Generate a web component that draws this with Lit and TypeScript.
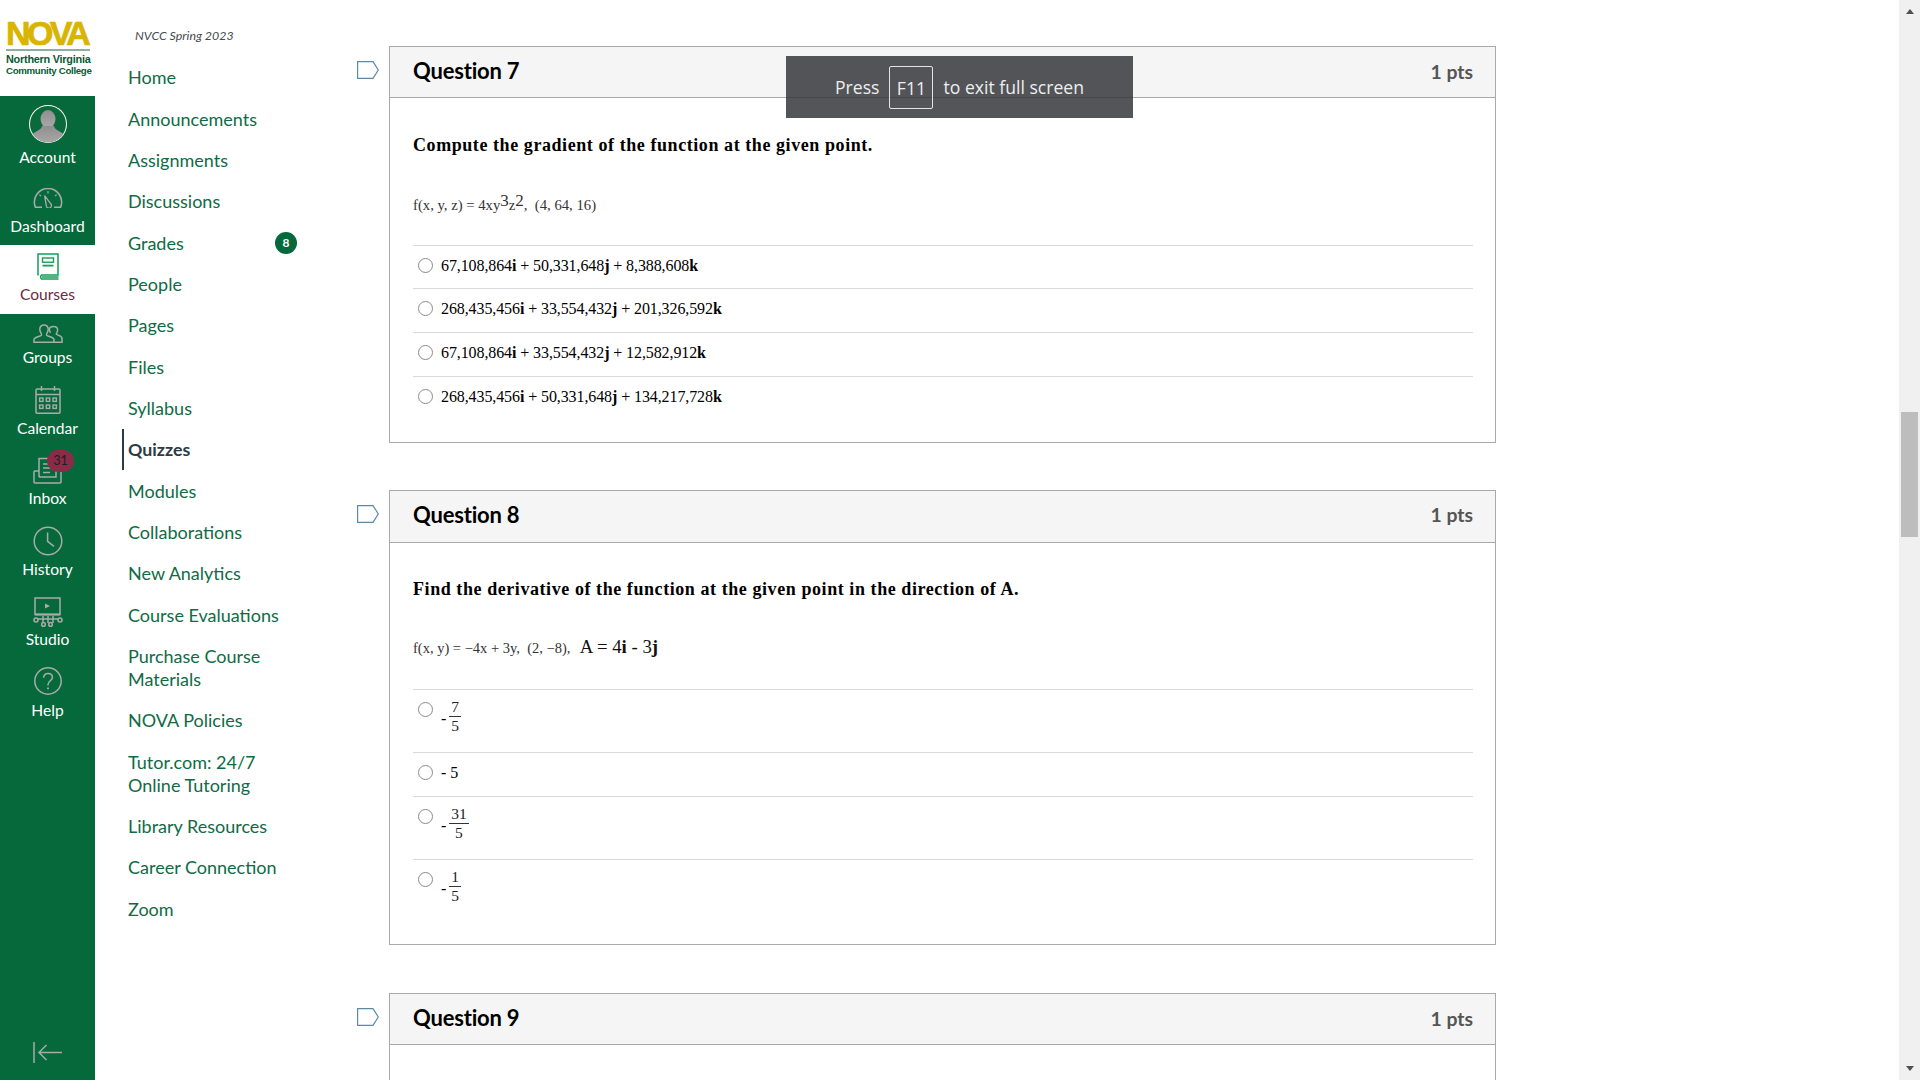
import { LitElement, html, css, svg } from "lit";
import { customElement } from "lit/decorators.js";

const S = "#a8aca9";
const G = "#12a05a";
const ic = (w: number, h: number, body: unknown, color = S) => html`<svg width=${w} height=${h} viewBox="0 0 ${w} ${h}" fill="none" stroke=${color} stroke-width="1.5">${body}</svg>`;

const icons: Record<string, () => unknown> = {
  account: () => html`<svg width="40" height="40" viewBox="0 0 40 40"><defs><linearGradient id="av" x1="0" y1="0" x2="0" y2="1"><stop offset="0" stop-color="#8f8f8f"/><stop offset="1" stop-color="#a9a9a9"/></linearGradient><clipPath id="avc"><circle cx="20" cy="20" r="18.5"/></clipPath></defs><circle cx="20" cy="20" r="19" fill="#fff"/><circle cx="20" cy="20" r="18" fill="#0a6a3c"/><g clip-path="url(#avc)" fill="url(#av)"><ellipse cx="20" cy="15" rx="7.5" ry="9"/><path d="M14 22 C13 27 6 27 3 32 V40 H37 V32 C34 27 27 27 26 22 Z"/></g></svg>`,
  dashboard: () => ic(30, 20, svg`<path d="M9 19.2H2.4A13.6 13.6 0 1 1 27.6 19.2H21"/><path d="M11.6 7.6 L17.6 15.6 A2.6 2.6 0 1 1 13.4 18.4 Z" stroke-width="1.3"/><path d="M15 3v2.4M6.4 6.6l1.6 1.6M23.6 6.6 22 8.2" stroke-width="1.2"/>`),
  courses: () => ic(24, 27, svg`<path d="M2 22.5V1H22V22H5.5A3 3 0 0 0 5.5 26H22.5M6 24H22.5"/><rect x="6.5" y="5" width="11" height="4.2" stroke-width="1.4"/><path d="M6.5 12.6H17.5" stroke-width="1.8"/>`, G),
  groups: () => ic(30, 19, svg`<path d="M1 18.2V15.6C1 13 7 12.5 8.4 11.2 9.2 10.2 7 8.6 6.8 5.6 6.6 2.4 8.7 1 11 1S15.4 2.4 15.2 5.6C15 8.6 12.8 10.2 13.6 11.2 15 12.5 21 13 21 15.6V18.2Z"/><path d="M17.5 8.8C16.6 7.6 16.2 6.4 16.4 5 16.7 3.3 18.2 2.4 20.6 2.4 23 2.4 24.6 3.8 24.6 6 24.6 7.8 23.6 9.2 23.2 10 23.6 11.2 29 11.4 29 14.4V18.2H21"/>`),
  calendar: () => ic(26, 29, svg`<rect x="1" y="4" width="24" height="24.2" rx="1"/><path d="M1 9.6H25M6.5 1V6M19.5 1V6"/><g stroke-width="1.4"><rect x="4.6" y="13" width="3.4" height="3.4"/><rect x="11.3" y="13" width="3.4" height="3.4"/><rect x="18" y="13" width="3.4" height="3.4"/><rect x="4.6" y="20" width="3.4" height="3.4"/><rect x="11.3" y="20" width="3.4" height="3.4"/><rect x="18" y="20" width="3.4" height="3.4"/></g>`),
  inbox: () => ic(29, 27, svg`<path d="M6 14H2A1 1 0 0 0 1 15V25A1 1 0 0 0 2 26H27A1 1 0 0 0 28 25V15A1 1 0 0 0 27 14H23"/><path d="M6 20V1.5H23V20H6" /><path d="M10 7H19M10 11H19M10 15.5H17"/>`),
  history: () => ic(30, 30, svg`<circle cx="15" cy="15" r="13.8"/><path d="M14.6 6.6V15.4L21 20.4"/>`),
  studio: () => ic(30, 30, svg`<rect x="2" y="1" width="25" height="16.5"/><path d="M2 17.5H27" stroke-width="2"/><path d="M12 6.5L17 9 12 11.6Z" fill="${S}" stroke="none"/><path d="M4 22H26M10 19V22M15 19V26M20 19V26M10 22V26"/><circle cx="3" cy="23" r="2"/><circle cx="10.5" cy="27.4" r="1.8"/><circle cx="17.5" cy="27.4" r="1.8"/><circle cx="27" cy="23" r="2"/>`),
  help: () => ic(28, 28, svg`<circle cx="14" cy="14" r="13.2"/><path d="M9.6 10.8C9.8 8 11.6 6.6 14 6.6 16.6 6.6 18.4 8.2 18.4 10.4 18.4 13.8 14 13.8 14 17.6V18.4"/><path d="M14 20.4V22.2" stroke-width="1.8"/>`),
};

const sideItems = [
  { k: "account", t: "Account", h: 79, p: 8, g: 3, on: false },
  { k: "dashboard", t: "Dashboard", h: 70, p: 13, g: 8, on: false },
  { k: "courses", t: "Courses", h: 69, p: 8, g: 4, on: true },
  { k: "groups", t: "Groups", h: 66, p: 10, g: 4, on: false },
  { k: "calendar", t: "Calendar", h: 70, p: 5, g: 4, on: false },
  { k: "inbox", t: "Inbox", h: 70, p: 7, g: 4, on: false },
  { k: "history", t: "History", h: 71, p: 6, g: 3, on: false },
  { k: "studio", t: "Studio", h: 70, p: 6, g: 2, on: false },
  { k: "help", t: "Help", h: 70, p: 6, g: 5, on: false },
];

const navItems = ["Home", "Announcements", "Assignments", "Discussions", "Grades", "People", "Pages", "Files", "Syllabus", "Quizzes", "Modules", "Collaborations", "New Analytics", "Course Evaluations", "Purchase Course Materials", "NOVA Policies", "Tutor.com: 24/7 Online Tutoring", "Library Resources", "Career Connection", "Zoom"];

const vec = (a: string, b: string, c: string) => html`${a}<b>i</b> + ${b}<b>j</b> + ${c}<b>k</b>`;

const tag = () => html`<svg class="tag" width="22" height="18" viewBox="0 0 22 18" fill="none" stroke="#5b8aa6" stroke-width="1.2"><path d="M.6.6H16L21.3 9 16 17.4H.6Z"/></svg>`;

const frac = (n: string, d: string) => html`<span class="minus">-</span><span class="frac"><span class="num">${n}</span><span class="den">${d}</span></span>`;

@customElement("app-root")
export class AppRoot extends LitElement {
  static styles = css`
    :host { display: block; }
    * { box-sizing: border-box; }
    .page { position: relative; display: flex; width: 1920px; height: 1080px; overflow: hidden; background: #fff; font-family: Lato, sans-serif; }

    .side { width: 95px; flex: none; height: 1080px; display: flex; flex-direction: column; background: #05693b; }
    .logo { height: 96px; background: #fff; padding: 19px 0 0 6px; display: flex; flex-direction: column; font-family: "Liberation Sans", sans-serif; font-weight: 700; color: #0a5a35; font-size: 10.9px; line-height: 11px; letter-spacing: -.25px; white-space: nowrap; }
    .nova { color: #d9b400; font-size: 34px; line-height: 29px; letter-spacing: -3.6px; -webkit-text-stroke: .7px #d9b400; }
    .rule { height: 2px; width: 84px; background: #8fae9f; margin: 1px 0 3px; }
    .cc { font-size: 9.7px; letter-spacing: -.32px; }
    .si { position: relative; display: flex; flex-direction: column; align-items: center; color: #fff; font-size: 15.6px; line-height: 20px; flex: none; }
    .si svg { display: block; }
    .si.on { background: #fff; color: #6b2b3f; }
    .bd { position: absolute; left: 47px; top: 0; width: 27px; height: 22px; border-radius: 11px; background: #8a2c48; color: #1d1d22; font-size: 12.5px; line-height: 21px; text-align: center; }
    .collapse { margin-top: auto; margin-bottom: 17px; align-self: center; display: block; }

    .nav { width: 262px; flex: none; padding: 26px 0 0 27px; }
    .term { font-size: 12.4px; line-height: 20px; font-style: italic; color: #444b50; margin: 0 0 11px 13px; }
    .nl { position: relative; width: 182px; padding: 9.18px 0 9.18px 6px; color: #0f6b45; font-size: 18px; line-height: 23px; }
    .nl.cur { border-left: 2px solid #2d3b45; padding-left: 4px; color: #2d3b45; font-weight: 700; font-size: 17.8px; }
    .nb { position: absolute; left: 153px; top: 10px; width: 22px; height: 22px; border-radius: 50%; background: #05693b; color: #fff; font-size: 12px; font-weight: 700; line-height: 22px; text-align: center; }

    .main { flex: none; padding-top: 46px; display: flex; flex-direction: column; }
    .q { display: flex; gap: 10px; align-items: flex-start; }
    .tag { flex: none; margin-top: 15px; display: block; }
    .card { width: 1107px; border: 1px solid #a9a9a9; background: #fff; }
    .head { display: flex; justify-content: space-between; align-items: center; height: 51px; padding: 0 22px 0 23px; background: #f5f5f5; border-bottom: 1px solid #a9a9a9; color: #000; }
    .q8 .head { height: 52px; }
    .title { font-size: 22px; font-weight: 700; letter-spacing: -.2px; margin-bottom: 3px; }
    .q8 .title { margin-bottom: 5px; }
    .pts { font-size: 19.4px; font-weight: 700; color: #555; margin-bottom: 2px; }
    .q8 .pts { margin-bottom: 4px; }
    .body { padding: 35px 22px 22px 23px; font-family: "Liberation Serif", serif; color: #000; }
    .q8 .body { padding-top: 34px; }
    .prompt { font-size: 18px; line-height: 24px; font-weight: 700; letter-spacing: .57px; }
    .eq { height: 24px; margin-top: 36px; margin-bottom: 28px; font-size: 14.7px; line-height: 24px; color: #333; white-space: pre; }
    .q8 .eq { margin-top: 34px; margin-bottom: 30px; font-size: 14.5px; }
    .eq sup { font-size: 17px; line-height: 0; vertical-align: 4px; }
    .big { font-size: 18.8px; color: #111; margin-left: 2px; }
    .q7 .eq + .row { height: 43px; }
    .row { display: flex; gap: 8px; align-items: flex-start; height: 44px; border-top: 1px solid #d9d9d9; padding-left: 5px; font-size: 16px; line-height: 20px; }
    .row.f { height: 63px; }
    .radio { flex: none; width: 15px; height: 15px; margin-top: 12px; border: 1.3px solid #8a8a8a; border-radius: 50%; }
    .opt { padding-top: 10px; letter-spacing: -.1px; white-space: nowrap; display: flex; }
    .opt b { font-weight: 700; }
    .row.f .opt { padding-top: 8px; align-items: flex-start; font-size: 15.5px; }
    .minus { margin: 11px 3px 0 0; font-size: 16px; line-height: 20px; }
    .frac { display: inline-flex; flex-direction: column; align-items: center; line-height: 18px; color: #222; }
    .num { display: block; padding: 0 2px; border-bottom: 1px solid #333; height: 19px; }
    .den { display: block; }
    .q8 { margin-top: 47px; }
    .q9 { margin-top: 48px; }
    .q9 .body { height: 200px; }

    .sb { position: absolute; right: 0; top: 0; width: 21px; height: 1080px; background: #f0f0f0; display: flex; flex-direction: column; align-items: center; }
    .arrow { width: 0; height: 0; border-left: 4.5px solid transparent; border-right: 4.5px solid transparent; border-bottom: 5px solid #505050; margin-top: 9px; }
    .arrow.dn { margin-top: auto; margin-bottom: 9px; border-bottom: 0; border-top: 5px solid #505050; }
    .thumb { width: 17px; height: 125px; margin-top: 398px; background: #bdbdbd; }

    .fs { position: absolute; left: 786px; top: 56px; width: 347px; height: 62px; background: rgba(48,51,55,.83); color: #eee; font-family: "Open Sans", sans-serif; font-size: 17.6px; display: flex; align-items: center; justify-content: center; gap: 10px; }
    .fs .key { display: block; width: 44px; height: 43px; border: 1px solid #e4e4e4; border-radius: 2px; text-align: center; line-height: 42px; }
  `;

  render() {
    return html`<div class="page">
      <aside class="side">
        <div class="logo"><span class="nova">NOVA</span><span class="rule"></span><span>Northern Virginia</span><span class="cc">Community College</span></div>
        ${sideItems.map((s) => html`<div class="si ${s.on ? "on" : ""}" style="height:${s.h}px;padding-top:${s.p}px;gap:${s.g}px">
          ${icons[s.k]()}<span>${s.t}</span>
          ${s.k === "inbox" ? html`<span class="bd">31</span>` : ""}
        </div>`)}
        <svg class="collapse" width="30" height="21" viewBox="0 0 30 21" fill="none" stroke="#a8aca9" stroke-width="1.5"><path d="M1 0V21M29 10.5H6M13.5 3 6 10.5 13.5 18"/></svg>
      </aside>
      <nav class="nav">
        <div class="term">NVCC Spring 2023</div>
        ${navItems.map((n) => html`<div class="nl ${n === "Quizzes" ? "cur" : ""}">${n}${n === "Grades" ? html`<span class="nb">8</span>` : ""}</div>`)}
      </nav>
      <main class="main">
        <div class="q q7">${tag()}<section class="card">
          <div class="head"><span class="title">Question 7</span><span class="pts">1 pts</span></div>
          <div class="body">
            <div class="prompt">Compute the gradient of the function at the given point.</div>
            <div class="eq">f(x, y, z) = 4xy<sup>3</sup>z<sup>2</sup>,  (4, 64, 16)</div>
            <div class="row"><span class="radio"></span><span class="opt"><span>${vec("67,108,864", "50,331,648", "8,388,608")}</span></span></div>
            <div class="row"><span class="radio"></span><span class="opt"><span>${vec("268,435,456", "33,554,432", "201,326,592")}</span></span></div>
            <div class="row"><span class="radio"></span><span class="opt"><span>${vec("67,108,864", "33,554,432", "12,582,912")}</span></span></div>
            <div class="row"><span class="radio"></span><span class="opt"><span>${vec("268,435,456", "50,331,648", "134,217,728")}</span></span></div>
          </div>
        </section></div>
        <div class="q q8">${tag()}<section class="card">
          <div class="head"><span class="title">Question 8</span><span class="pts">1 pts</span></div>
          <div class="body">
            <div class="prompt">Find the derivative of the function at the given point in the direction of A.</div>
            <div class="eq">f(x, y) = −4x + 3y,  (2, −8),  <span class="big">A = 4<b>i</b> - 3<b>j</b></span></div>
            <div class="row f"><span class="radio"></span><span class="opt">${frac("7", "5")}</span></div>
            <div class="row"><span class="radio"></span><span class="opt">- 5</span></div>
            <div class="row f"><span class="radio"></span><span class="opt">${frac("31", "5")}</span></div>
            <div class="row f"><span class="radio"></span><span class="opt">${frac("1", "5")}</span></div>
          </div>
        </section></div>
        <div class="q q9">${tag()}<section class="card">
          <div class="head"><span class="title">Question 9</span><span class="pts">1 pts</span></div>
          <div class="body"></div>
        </section></div>
      </main>
      <div class="sb"><span class="arrow"></span><span class="thumb"></span><span class="arrow dn"></span></div>
      <div class="fs"><span>Press</span><span class="key">F11</span><span>to exit full screen</span></div>
    </div>`;
  }
}
